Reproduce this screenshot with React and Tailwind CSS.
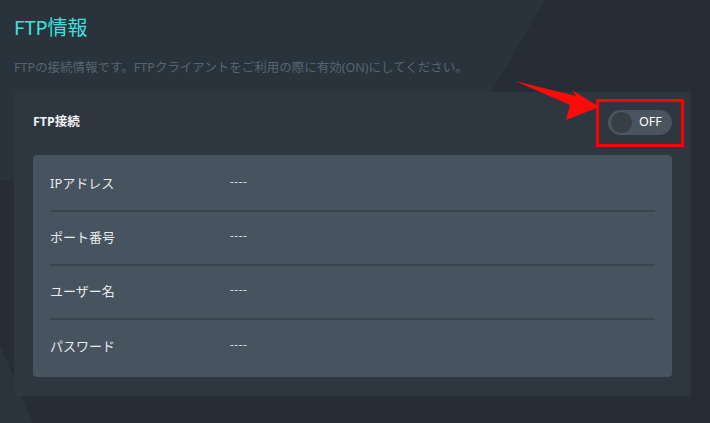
import React from 'react';

const rows = [
    { label: 'IPアドレス', value: '----' },
    { label: 'ポート番号', value: '----' },
    { label: 'ユーザー名', value: '----' },
    { label: 'パスワード', value: '----' },
];

function Backdrop() {
    return (
        <svg className="absolute inset-0 w-full h-full" viewBox="0 0 710 423" preserveAspectRatio="none">
            <polygon points="0,0 545,0 440,180 0,180" fill="#28333c" />
            <polygon points="0,345 33,423 0,423" fill="#29343d" />
        </svg>
    );
}

function Arrow() {
    return (
        <svg className="absolute left-0 top-0 pointer-events-none" width="710" height="423" viewBox="0 0 710 423">
            <polygon points="515,81 576,96 572,90 599,107 566,120 570,105" fill="#ff0a0a" />
        </svg>
    );
}

export default function App() {
    return (
        <div
            className="relative w-[710px] h-[423px] overflow-hidden bg-[#262d36]"
            style={{ fontFamily: '"Noto Sans", "Noto Sans CJK JP", sans-serif' }}
        >
            <Backdrop />
            <div className="relative pl-[14px] pr-[19px] pt-[15px]">
                <h1 className="text-[20px] leading-[26px] text-[#3fe0dc]">FTP情報</h1>
                <p className="mt-[18px] text-[12.5px] leading-[17px] text-[#586470]">
                    FTPの接続情報です。FTPクライアントをご利用の際に有効(ON)にしてください。
                </p>

                <div className="mt-[16px] bg-[#2e3640] px-[19px] pt-[18px] pb-[19px]">
                    <div className="flex items-center justify-between h-[25px] mb-[20px]">
                        <span className="text-[12.5px] font-bold text-[#eef0f2]">FTP接続</span>
                        <div className="relative">
                            <div className="flex items-center w-[64px] h-[25px] rounded-full bg-[#4a545e] pl-[3px]">
                                <span className="w-[21px] h-[21px] rounded-full bg-[#363e46]" />
                                <span className="ml-[7px] text-[12.5px] text-white">OFF</span>
                            </div>
                            <div className="absolute left-[-12px] top-[-11px] w-[88px] h-[48px] border-[3px] border-[#ff0000]" />
                        </div>
                    </div>

                    <div className="rounded-[4px] bg-[#47535e] px-[17px] py-[3px]">
                        {rows.map((row, i) => (
                            <div
                                key={row.label}
                                className={`flex items-center h-[54px] ${i < rows.length - 1 ? 'border-b-2 border-[#3a444f]' : ''}`}
                            >
                                <span className="w-[180px] text-[13px] text-[#e8ebee]">{row.label}</span>
                                <span className="text-[12px] tracking-[0.5px] text-[#d3d7db] -mt-[4px]">{row.value}</span>
                            </div>
                        ))}
                    </div>
                </div>
            </div>
            <Arrow />
        </div>
    );
}
